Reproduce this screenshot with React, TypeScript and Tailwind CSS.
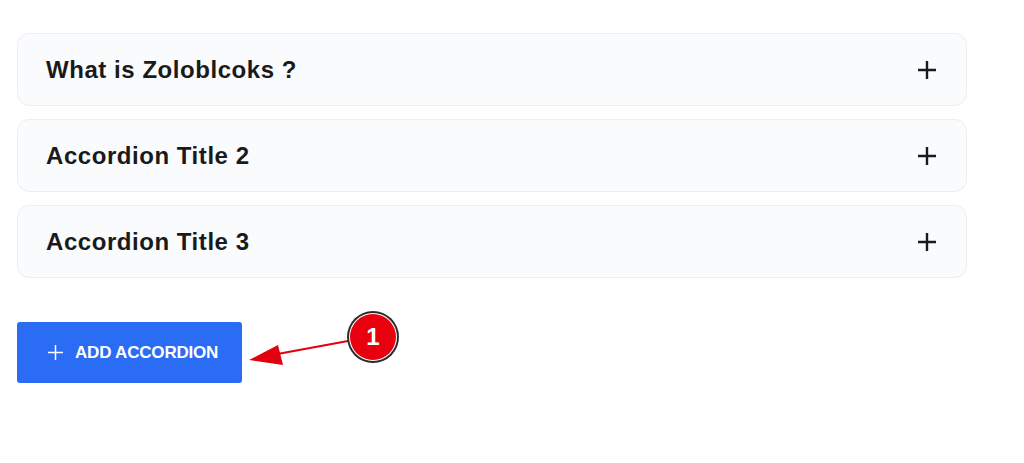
import React from "react";

const items = ["What is Zoloblcoks ?", "Accordion Title 2", "Accordion Title 3"];

function PlusIcon({ size, stroke }: { size: number; stroke: number }) {
  return (
    <svg width={size} height={size} viewBox="0 0 18 18" fill="none">
      <path d="M9 0V18M0 9H18" stroke="currentColor" strokeWidth={stroke} />
    </svg>
  );
}

export default function App() {
  return (
    <div
      className="relative w-[1024px] h-[463px] bg-white overflow-hidden"
      style={{ fontFamily: '"Liberation Sans", Arial, sans-serif' }}
    >
      <div className="pl-[17px] pt-[33px] w-[967px] flex flex-col gap-[13px]">
        {items.map((t) => (
          <div
            key={t}
            className="h-[73px] rounded-[12px] border border-[#eceef1] bg-[#fafbfd] flex items-center justify-between pl-[28px] pr-[30px]"
          >
            <span className="text-[24px] leading-none font-bold text-[#1a1a1a] tracking-[0.55px]">{t}</span>
            <span className="text-[#1a1a1a]">
              <PlusIcon size={18} stroke={2.4} />
            </span>
          </div>
        ))}
      </div>

      <div className="pl-[17px] pt-[44px]">
        <button className="w-[225px] h-[61px] rounded-[3px] bg-[#2a6cf4] text-white flex items-center pl-[31px] gap-[12px]">
          <PlusIcon size={15} stroke={1.8} />
          <span className="text-[17px] font-bold uppercase tracking-[-0.2px]">Add Accordion</span>
        </button>
      </div>

      {/* callout arrow */}
      <svg className="absolute left-0 top-0 pointer-events-none" width="1024" height="463">
        <line x1="348" y1="341" x2="272" y2="355" stroke="#e3000f" strokeWidth="2.2" />
        <polygon points="249,360 278,345 283,365" fill="#e3000f" />
      </svg>

      {/* step badge */}
      <div className="absolute left-[347px] top-[311px] w-[52px] h-[52px] rounded-full bg-[#2b2b2b] p-[2px]">
        <div className="w-full h-full rounded-full bg-white p-[1px]">
          <div className="w-full h-full rounded-full bg-[#e8000e] flex items-center justify-center text-white font-bold text-[24px]">
            1
          </div>
        </div>
      </div>
    </div>
  );
}
